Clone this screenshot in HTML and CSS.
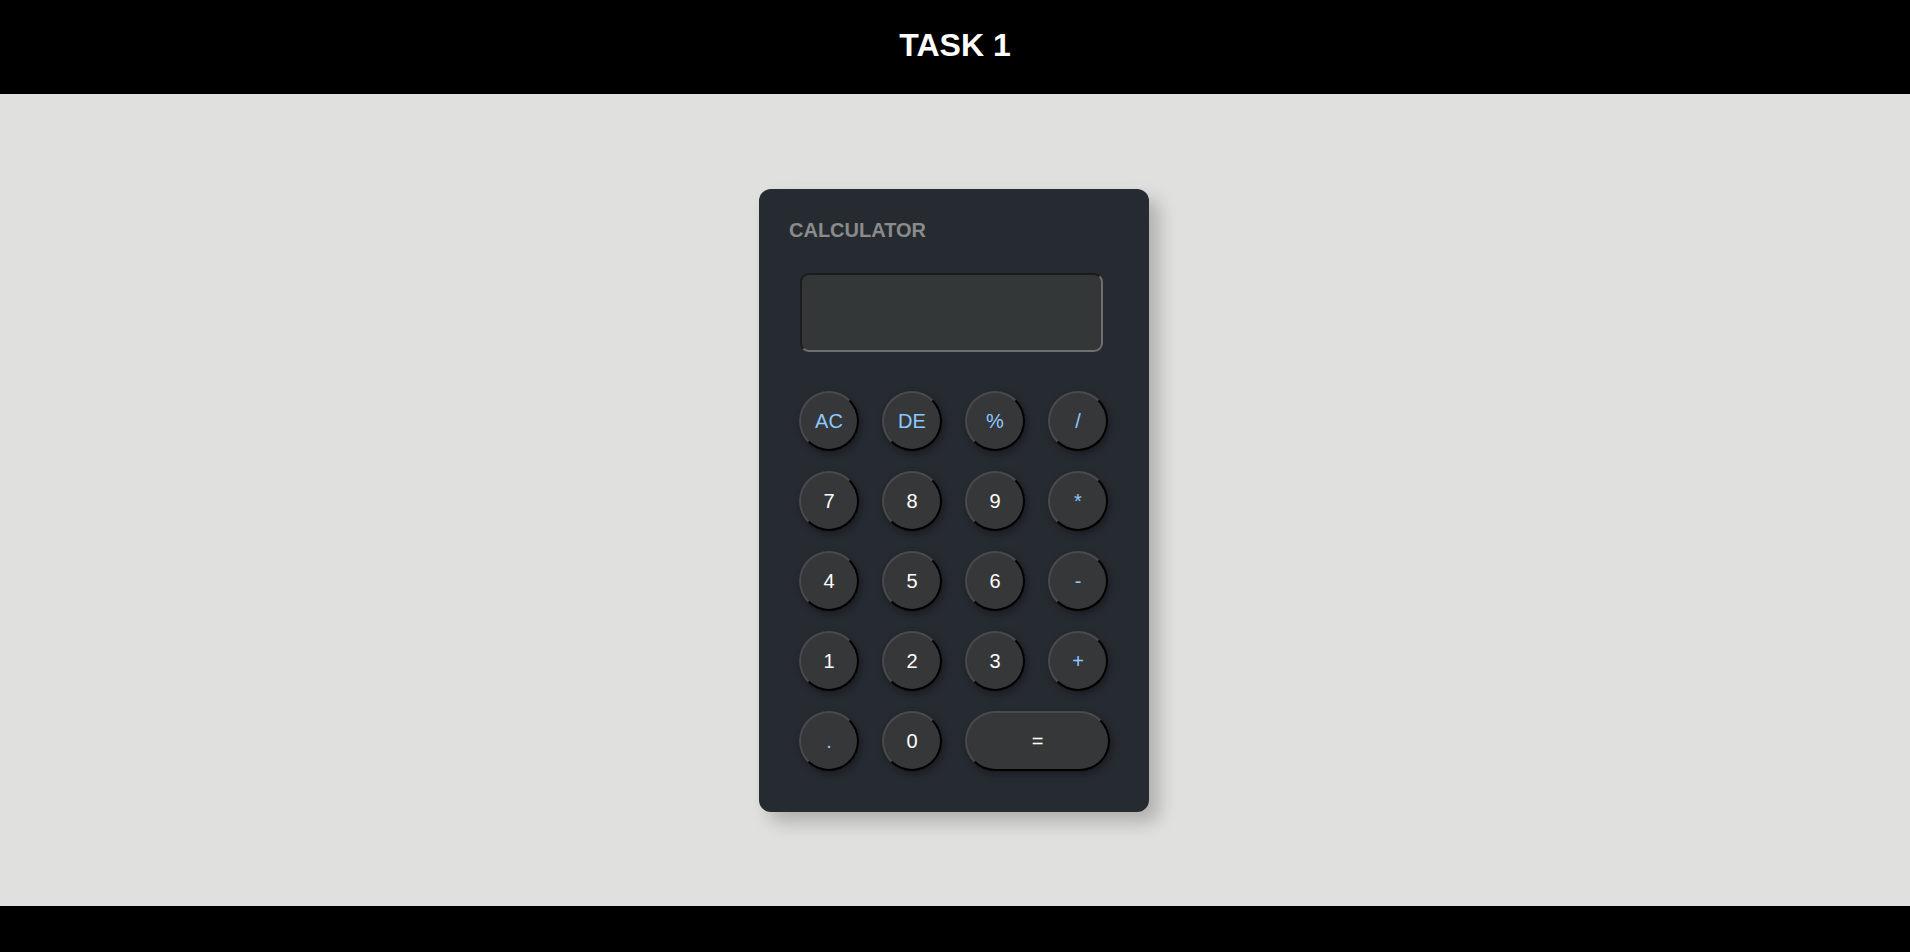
FILE: index.html
```html
<!DOCTYPE html>
<html>
<head>
<meta charset="utf-8">
<link rel="stylesheet" href="styles.css">
</head>
<body>
<header class="top"><h1 class="title">TASK 1</h1></header>
<main class="main">
  <div class="calc">
    <div class="calc-name">CALCULATOR</div>
    <div class="display"></div>
    <div class="keys">
      <button class="key op">AC</button>
      <button class="key op">DE</button>
      <button class="key op">%</button>
      <button class="key op">/</button>
      <button class="key">7</button>
      <button class="key">8</button>
      <button class="key">9</button>
      <button class="key op">*</button>
      <button class="key">4</button>
      <button class="key">5</button>
      <button class="key">6</button>
      <button class="key op">-</button>
      <button class="key">1</button>
      <button class="key">2</button>
      <button class="key">3</button>
      <button class="key op">+</button>
      <button class="key op">.</button>
      <button class="key">0</button>
      <button class="key wide">=</button>
    </div>
  </div>
</main>
<footer class="bottom"></footer>
</body>
</html>
```
FILE: styles.css
```css
* { box-sizing: border-box; }
html, body { margin: 0; padding: 0; height: 100%; }
body {
  font-family: "Liberation Sans", Arial, sans-serif;
  background: #e0e0de;
  display: flex;
  flex-direction: column;
  min-height: 952px;
}
.top {
  background: #000;
  height: 94px;
  display: flex;
  align-items: center;
  justify-content: center;
}
.title {
  margin: 0;
  color: #fff;
  font-size: 32px;
  font-weight: bold;
  line-height: 1;
  padding-bottom: 4px;
}
.main {
  flex: 1;
  display: flex;
  align-items: center;
  justify-content: center;
  padding-right: 2px;
}
.calc {
  width: 390px;
  height: 623px;
  background: #262a31;
  border-radius: 12px;
  padding: 30px 0 0 0;
  box-shadow: 10px 10px 18px rgba(0, 0, 0, 0.22);
  margin-top: 1px;
}
.calc-name {
  color: #8b8b8b;
  font-weight: bold;
  font-size: 20px;
  line-height: 23px;
  padding-left: 30px;
}
.display {
  width: 303px;
  height: 79px;
  margin: 31px 0 0 41px;
  background: #343738;
  border: 2px solid;
  border-color: #1b1c1e #6f6f6f #6f6f6f #1b1c1e;
  border-radius: 9px;
}
.keys {
  margin: 39px 0 0 40px;
  display: grid;
  grid-template-columns: repeat(4, 60px);
  grid-auto-rows: 60px;
  column-gap: 23px;
  row-gap: 20px;
}
.key {
  width: 60px;
  height: 60px;
  border-radius: 50%;
  background: #353738;
  border: 2px solid;
  border-color: #484a4c #000 #000 #484a4c;
  color: #fff;
  font-family: "Liberation Sans", Arial, sans-serif;
  font-size: 20px;
  padding: 0;
  box-shadow: 2px 3px 7px rgba(0, 0, 0, 0.35);
}
.key.op { color: #8ec8ff; }
.key.wide {
  grid-column: span 2;
  width: 145px;
  border-radius: 30px;
}
.bottom {
  background: #000;
  height: 46px;
}
```
